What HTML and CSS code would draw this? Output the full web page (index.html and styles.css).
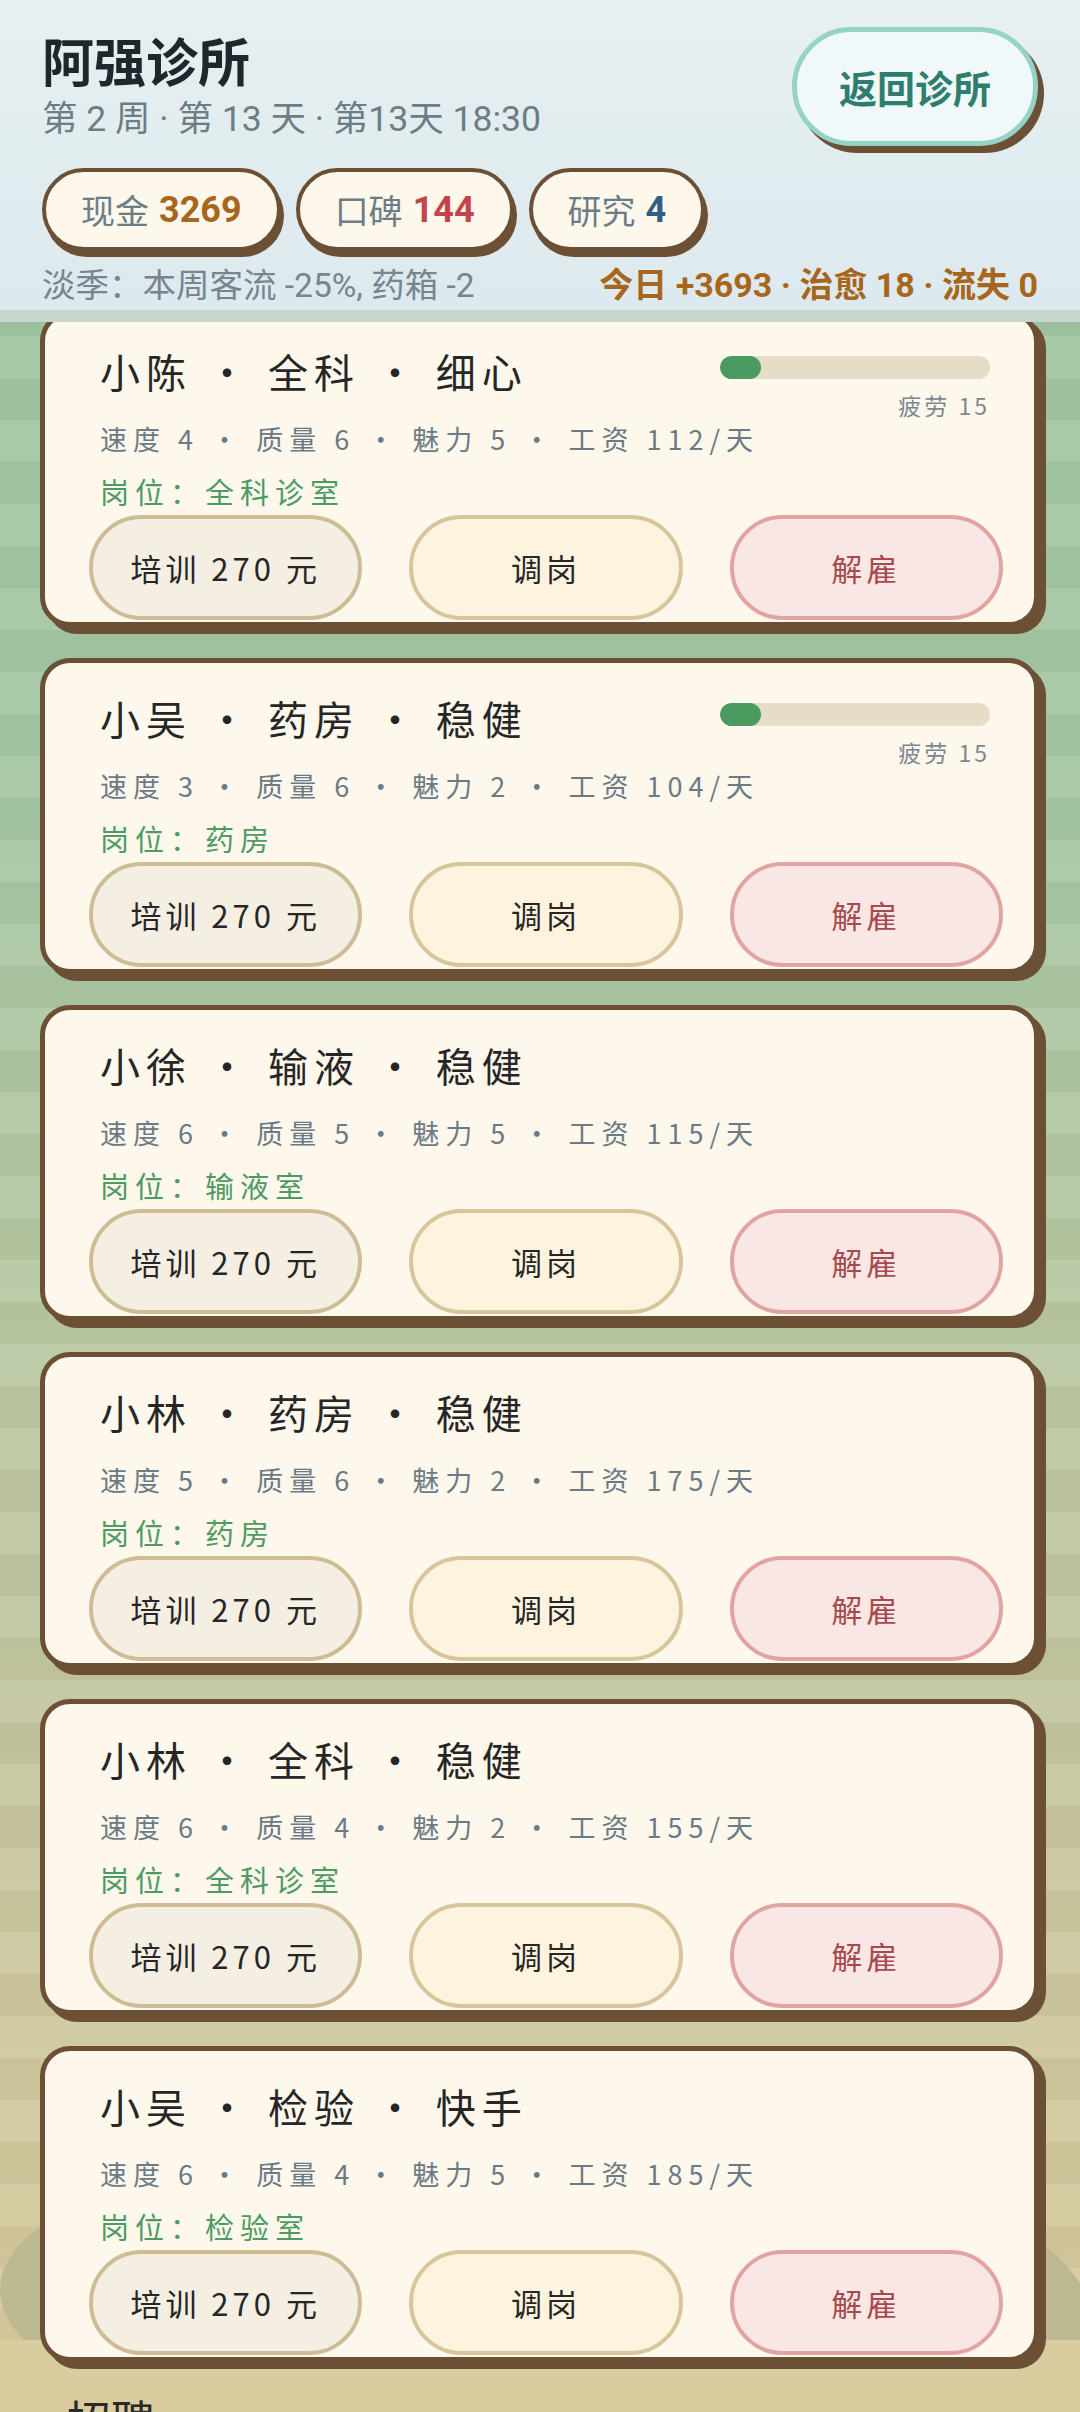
FILE: index.html
```html
<!DOCTYPE html>
<html lang="zh-CN">
<head>
<meta charset="utf-8">
<title>阿强诊所 · 员工</title>
<link rel="stylesheet" href="styles.css">
</head>
<body>
<div class="scene">
  <div class="hill hill-left"></div>
  <div class="hill hill-right"></div>
  <div class="floor"></div>
</div>

<header class="header">
  <div class="head-row">
    <div class="head-text">
      <h1 class="title">阿强诊所</h1>
      <div class="subtitle">第 2 周 · 第 13 天 · 第13天 18:30</div>
    </div>
    <button class="back-btn">返回诊所</button>
  </div>
  <div class="pills">
    <div class="pill"><span class="pill-label">现金</span> <span class="pill-val val-cash">3269</span></div>
    <div class="pill"><span class="pill-label">口碑</span> <span class="pill-val val-rep">144</span></div>
    <div class="pill"><span class="pill-label">研究</span> <span class="pill-val val-res">4</span></div>
  </div>
  <div class="status-row">
    <span class="season">淡季：本周客流 -25%, 药箱 -2</span>
    <span class="today">今日 +3693 · 治愈 18 · 流失 0</span>
  </div>
</header>

<main class="list">
  <section class="card">
    <div class="card-top">
      <div class="info">
        <div class="name">小陈 · 全科 · 细心</div>
        <div class="stats">速度 4 · 质量 6 · 魅力 5 · 工资 112/天</div>
        <div class="post">岗位：全科诊室</div>
      </div>
      <div class="fatigue">
        <div class="bar"><div class="fill" style="width:15%"></div></div>
        <div class="flabel">疲劳 15</div>
      </div>
    </div>
    <div class="actions">
      <button class="act act-train">培训 270 元</button>
      <button class="act act-move">调岗</button>
      <button class="act act-fire">解雇</button>
    </div>
  </section>

  <section class="card">
    <div class="card-top">
      <div class="info">
        <div class="name">小吴 · 药房 · 稳健</div>
        <div class="stats">速度 3 · 质量 6 · 魅力 2 · 工资 104/天</div>
        <div class="post">岗位：药房</div>
      </div>
      <div class="fatigue">
        <div class="bar"><div class="fill" style="width:15%"></div></div>
        <div class="flabel">疲劳 15</div>
      </div>
    </div>
    <div class="actions">
      <button class="act act-train">培训 270 元</button>
      <button class="act act-move">调岗</button>
      <button class="act act-fire">解雇</button>
    </div>
  </section>

  <section class="card">
    <div class="card-top">
      <div class="info">
        <div class="name">小徐 · 输液 · 稳健</div>
        <div class="stats">速度 6 · 质量 5 · 魅力 5 · 工资 115/天</div>
        <div class="post">岗位：输液室</div>
      </div>
    </div>
    <div class="actions">
      <button class="act act-train">培训 270 元</button>
      <button class="act act-move">调岗</button>
      <button class="act act-fire">解雇</button>
    </div>
  </section>

  <section class="card">
    <div class="card-top">
      <div class="info">
        <div class="name">小林 · 药房 · 稳健</div>
        <div class="stats">速度 5 · 质量 6 · 魅力 2 · 工资 175/天</div>
        <div class="post">岗位：药房</div>
      </div>
    </div>
    <div class="actions">
      <button class="act act-train">培训 270 元</button>
      <button class="act act-move">调岗</button>
      <button class="act act-fire">解雇</button>
    </div>
  </section>

  <section class="card">
    <div class="card-top">
      <div class="info">
        <div class="name">小林 · 全科 · 稳健</div>
        <div class="stats">速度 6 · 质量 4 · 魅力 2 · 工资 155/天</div>
        <div class="post">岗位：全科诊室</div>
      </div>
    </div>
    <div class="actions">
      <button class="act act-train">培训 270 元</button>
      <button class="act act-move">调岗</button>
      <button class="act act-fire">解雇</button>
    </div>
  </section>

  <section class="card">
    <div class="card-top">
      <div class="info">
        <div class="name">小吴 · 检验 · 快手</div>
        <div class="stats">速度 6 · 质量 4 · 魅力 5 · 工资 185/天</div>
        <div class="post">岗位：检验室</div>
      </div>
    </div>
    <div class="actions">
      <button class="act act-train">培训 270 元</button>
      <button class="act act-move">调岗</button>
      <button class="act act-fire">解雇</button>
    </div>
  </section>

  <h2 class="section-title">招聘</h2>
</main>
</body>
</html>
```

FILE: styles.css
```css
* { box-sizing: border-box; }

html, body {
  margin: 0;
  padding: 0;
}

body {
  width: 1080px;
  height: 2412px;
  overflow: hidden;
  position: relative;
  font-family: "Noto Sans CJK SC", "Noto Sans", sans-serif;
  color: #2a2a2a;
  background:
    repeating-linear-gradient(to bottom,
      rgba(255,255,255,0.07) 0px, rgba(255,255,255,0.07) 42px,
      rgba(0,0,0,0.025) 42px, rgba(0,0,0,0.025) 84px),
    linear-gradient(to bottom,
      #9ec5a2 0px, #a4c6a2 800px, #b7c7a1 1300px,
      #c4c59f 1750px, #d2c89c 2150px, #d8cb9c 2412px);
}

/* decorative background hills */
.scene {
  position: absolute;
  inset: 0;
  z-index: 0;
  pointer-events: none;
  overflow: hidden;
}
.hill {
  position: absolute;
  background: #bdb991;
  border-radius: 50%;
}
.hill-left {
  left: 0;
  top: 2190px;
  width: 358px;
  height: 200px;
}
.hill-right {
  left: 770px;
  top: 2209px;
  width: 360px;
  height: 480px;
}
.floor {
  position: absolute;
  left: 0;
  right: 0;
  top: 2340px;
  bottom: 0;
  background: #d9cc9e;
}

/* header */
.header {
  position: fixed;
  top: 0;
  left: 0;
  right: 0;
  height: 322px;
  z-index: 10;
  padding: 30px 42px 0 42px;
  font-family: "Roboto", "Noto Sans CJK SC", sans-serif;
  background: linear-gradient(to bottom, #e7f0f1, #dce9ee);
  border-bottom: 12px solid #c6d6cf;
}
.head-row {
  display: flex;
  justify-content: space-between;
  align-items: flex-start;
}
.title {
  margin: 0;
  font-family: "Noto Sans CJK SC", sans-serif;
  font-size: 52px;
  line-height: 60px;
  font-weight: 700;
  color: #1e272c;
}
.subtitle {
  margin-top: 7px;
  font-size: 35.5px;
  line-height: 44px;
  color: #6d7d86;
}
.back-btn {
  margin-top: -3px;
  width: 246px;
  height: 119px;
  border-radius: 60px;
  border: 5px solid #95d3c7;
  background: #f1f8f9;
  box-shadow: 6px 7px 0 #6b5035;
  font-family: "Noto Sans CJK SC", sans-serif;
  font-size: 38px;
  font-weight: 700;
  color: #2e7e70;
  padding: 0;
}
.pills {
  display: flex;
  gap: 15px;
  margin-top: 22px;
}
.pill {
  height: 83px;
  display: flex;
  align-items: center;
  gap: 10px;
  padding: 0 35px;
  border: 4px solid #6b5035;
  border-radius: 42px;
  background: #fdf7ec;
  box-shadow: 3px 6px 0 #6b5035;
}
.pill-label {
  font-size: 34px;
  color: #6d7d86;
}
.pill-val {
  font-size: 36px;
  font-weight: 700;
}
.val-cash { color: #a8661c; }
.val-rep { color: #c4444b; }
.val-res { color: #2f5f86; }

.status-row {
  display: flex;
  justify-content: space-between;
  align-items: baseline;
  margin-top: 14px;
  line-height: 40px;
}
.season {
  font-size: 33.5px;
  color: #76858e;
}
.today {
  font-size: 34px;
  font-weight: 700;
  color: #a8661c;
}

/* list */
.list {
  position: relative;
  z-index: 1;
  display: flex;
  flex-direction: column;
  gap: 31px;
  padding: 311px 41px 0 40px;
}
.card {
  height: 316px;
  border: 5px solid #6b5035;
  border-radius: 30px;
  background: #fdf7ec;
  box-shadow: 7px 7px 0 #6b5035;
  padding: 31px 31px 2px 44px;
  display: flex;
  flex-direction: column;
}
.card-top {
  display: grid;
}
.info,
.fatigue {
  grid-area: 1 / 1;
}
.info {
  margin-left: 11px;
}
.name {
  font-size: 40px;
  line-height: 48px;
  letter-spacing: 6px;
  color: #262626;
}
.stats {
  margin-top: 24px;
  font-size: 27px;
  line-height: 40px;
  letter-spacing: 6px;
  color: #6c7a86;
  white-space: nowrap;
}
.post {
  margin-top: 12px;
  font-size: 29px;
  line-height: 40px;
  letter-spacing: 6px;
  color: #4d9a62;
}
.fatigue {
  justify-self: end;
  align-self: start;
  width: 270px;
  margin-right: 13px;
  display: flex;
  flex-direction: column;
  align-items: flex-end;
}
.bar {
  margin-top: 9px;
  width: 270px;
  height: 23px;
  border-radius: 12px;
  background: #e7dcc7;
  overflow: hidden;
}
.fill {
  height: 100%;
  border-radius: 12px;
  background: #4b9a5f;
}
.flabel {
  margin-top: 11px;
  font-size: 23px;
  line-height: 30px;
  letter-spacing: 3px;
  color: #7d8790;
}
.actions {
  margin-top: auto;
  display: grid;
  grid-template-columns: repeat(3, 1fr);
  gap: 47px;
}
.act {
  height: 105px;
  border-radius: 53px;
  font-family: "Noto Sans CJK SC", sans-serif;
  font-size: 31px;
  letter-spacing: 4px;
  padding: 0;
}
.act-train {
  border: 4px solid #cdbc96;
  background: #f4eee3;
  color: #262626;
}
.act-move {
  border: 4px solid #d8c59c;
  background: #fdf3df;
  color: #262626;
}
.act-fire {
  border: 4px solid #e2a3a3;
  background: #f9e7e5;
  color: #a64a4e;
}
.section-title {
  margin: -2px 0 0 27px;
  font-size: 44px;
  font-weight: 400;
  line-height: 56px;
  color: #2a2a2a;
}
```
